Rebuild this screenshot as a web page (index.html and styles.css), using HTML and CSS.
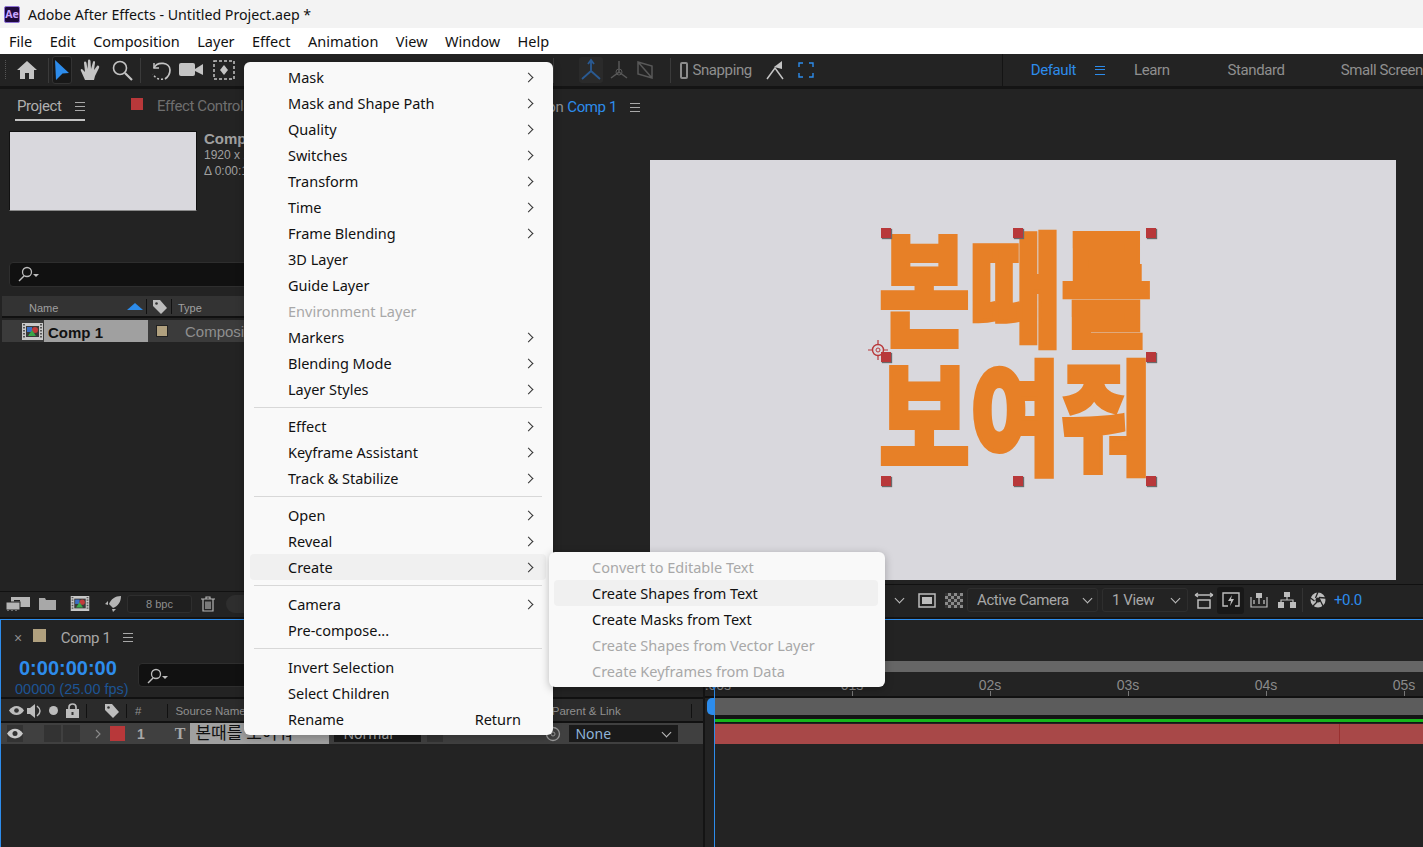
FILE: index.html
```html
<!DOCTYPE html>
<html lang="en">
<head>
    <meta charset="UTF-8">
    <meta name="viewport" content="width=device-width, initial-scale=1.0">
    <title>Adobe After Effects - Untitled Project.aep *</title>
    <link rel="stylesheet" href="styles.css">
</head>
<body>
<div class="titlebar">
    <div class="ae-logo">Ae</div>
    <span>Adobe After Effects - Untitled Project.aep *</span>
</div>
<div class="menubar">
    <span>File</span><span>Edit</span><span>Composition</span><span>Layer</span><span>Effect</span>
    <span>Animation</span><span>View</span><span>Window</span><span>Help</span>
</div>

<div class="toolbar">
    <div class="grip"></div>
    <svg class="tool-home" width="22" height="20" viewBox="0 0 22 20"><path d="M11 1 L21 10 L18 10 L18 19 L13 19 L13 13 L9 13 L9 19 L4 19 L4 10 L1 10 Z" fill="#c4c4c4"/></svg>
    <div class="tool-sep"></div>
    <div class="tool-active"><svg width="18" height="22" viewBox="0 0 18 22"><path d="M2 1 L16 14 L9.500 14.500 L3 21 Z" fill="#2d8ceb"/></svg></div>
    <svg class="tool-hand" width="22" height="24" viewBox="0 0 22 24"><path d="M6 22 L2 13 C1 11 3 10 4 12 L6 14 L5 5 C5 3 7 3 7.500 5 L8.500 11 L9 3 C9 1 11 1 11.500 3 L12 11 L14 4 C14.500 2 16.500 3 16 5 L15 12 L18 8 C19 7 21 8 20 10 L16 18 L15 22 Z" fill="#c4c4c4"/></svg>
    <svg class="tool-zoom" width="22" height="22" viewBox="0 0 22 22"><circle cx="9" cy="9" r="6.500" fill="none" stroke="#c4c4c4" stroke-width="1.600"/><path d="M14 14 L21 21" stroke="#c4c4c4" stroke-width="2.200"/></svg>
    <div class="tool-sep tool-sep-b"></div>
    <svg class="tool-rotate" width="22" height="22" viewBox="0 0 22 22"><path d="M4 4 L4 9 L9 9" fill="none" stroke="#c4c4c4" stroke-width="1.500"/><path d="M4 9 C7 2 20 3 20 11 C20 15 18 18 15 20" fill="none" stroke="#c4c4c4" stroke-width="1.700"/><path d="M13 20 C9 21 5 19 3 15" fill="none" stroke="#c4c4c4" stroke-width="1.500" stroke-dasharray="2 2"/></svg>
    <svg class="tool-cam" width="25" height="18" viewBox="0 0 25 18"><rect x="0" y="2" width="16" height="13" rx="2" fill="#c4c4c4"/><path d="M16 8 L24 3 L24 14 L16 10 Z" fill="#c4c4c4"/></svg>
    <svg class="tool-pan" width="22" height="20" viewBox="0 0 22 20"><rect x="1" y="1" width="20" height="18" fill="none" stroke="#c4c4c4" stroke-width="1.500" stroke-dasharray="3 2"/><path d="M11 5 L15 10 L11 15 L7 10 Z" fill="#c4c4c4"/></svg>

    <div class="tool-sep tool-sep-c"></div>
    <div class="axis-active"><svg width="24" height="24" viewBox="0 0 24 24"><path d="M12 3 L12 13 L3 21 M12 13 L21 21 M9 6 L12 2 L15 6" fill="none" stroke="#2a5a92" stroke-width="1.800"/></svg></div>
    <svg class="axis" width="22" height="22" viewBox="0 0 22 22"><path d="M11 2 L11 13 L3 19 M11 13 L19 19" fill="none" stroke="#585858" stroke-width="1.500"/><circle cx="11" cy="13" r="3" fill="none" stroke="#585858"/></svg>
    <svg class="axis" width="20" height="22" viewBox="0 0 20 22"><path d="M3 3 L17 7 L17 19 L3 15 Z M3 3 L17 19" fill="none" stroke="#585858" stroke-width="1.500"/></svg>
    <div class="tool-sep tool-sep-d"></div>
    <div class="snap-box"></div>
    <span class="snap-label narrow">Snapping</span>
    <svg class="snap-icon" width="18" height="20" viewBox="0 0 18 20"><path d="M1 19 L9 8 L17 19" fill="none" stroke="#c4c4c4" stroke-width="1.500"/><path d="M8 7 L16 1 L16 9 Z" fill="#c4c4c4"/></svg>
    <svg class="snap-icon-b" width="16" height="16" viewBox="0 0 16 16"><path d="M1 5 L1 1 L5 1 M11 1 L15 1 L15 5 M15 11 L15 15 L11 15 M5 15 L1 15 L1 11" fill="none" stroke="#2d8ceb" stroke-width="1.400"/><path d="M6 6 L6 6.100 M10 6 L10 6.100 M6 10 L6 10.100 M10 10 L10 10.100" stroke="#2d8ceb" stroke-width="1.500"/></svg>
    <div class="workspace narrow">
        <span class="ws-default">Default</span>
        <div class="burger burger-blue"></div>
        <span class="ws-learn">Learn</span>
        <span class="ws-standard">Standard</span>
        <span class="ws-small">Small Screen</span>
    </div>
</div>

<div class="main">
    <div class="project">
        <div class="tabs narrow">
            <div class="tab-project">Project <div class="burger"></div></div>
            <div class="swatch-red"></div>
            <span class="tab-effect">Effect Controls</span>
        </div>
        <div class="project-info">
            <div class="thumb"></div>
            <div class="info-text">
                <b>Comp 1</b>
                <div>1920 x 1080</div>
                <div>Δ 0:00:10:00</div>
            </div>
        </div>
        <div class="search">
            <svg width="22" height="16" viewBox="0 0 22 16"><circle cx="9" cy="6" r="4.500" fill="none" stroke="#bdbdbd" stroke-width="1.300"/><path d="M6 10 L1 15" stroke="#bdbdbd" stroke-width="1.500"/><path d="M15 8 L21 8 L18 11 Z" fill="#bdbdbd"/></svg>
        </div>
        <div class="table-head">
            <div class="th-name">Name</div>
            <div class="sort-arrow"></div>
            <div class="th-sep"></div>
            <svg class="th-tag" width="16" height="16" viewBox="0 0 16 16"><path d="M1 1 L8 1 L15 9 L9 15 L1 7 Z" fill="#bdbdbd"/><circle cx="4.500" cy="4.500" r="1.300" fill="#333"/></svg>
            <div class="th-sep"></div>
            <div class="th-type">Type</div>
        </div>
        <div class="table-row">
            <svg class="comp-icon" width="21" height="17" viewBox="0 0 21 17"><rect width="21" height="17" fill="#c8c8c8"/><path d="M2 1 V16 M19 1 V16" stroke="#555" stroke-width="2" stroke-dasharray="1.500 1.500"/><rect x="4" y="3" width="13" height="11" fill="#3a3a3a"/><rect x="5" y="4" width="5" height="5" fill="#3b6fc4"/><circle cx="13" cy="7" r="3" fill="#c23b3b"/><path d="M6 13 L10 7 L14 13 Z" fill="#3aa84a"/></svg>
            <div class="comp-name">Comp 1</div>
            <div class="swatch-tan"></div>
            <div class="comp-type">Composition</div>
        </div>
        <div class="spacer"></div>
        <div class="project-foot">
            <svg class="foot-a" width="24" height="15" viewBox="0 0 24 15"><rect x="5" y="1" width="19" height="10" fill="#b5b5b5"/><rect x="8" y="4" width="6" height="1.500" fill="#222"/><rect x="0" y="6" width="14" height="8" fill="#b5b5b5" stroke="#232323"/><path d="M2 14 v1 M6 14 v1 M10 14 v1" stroke="#b5b5b5"/></svg>
            <svg class="foot-b" width="17" height="13" viewBox="0 0 17 13"><path d="M0 1 L6 1 L7 3 L17 3 L17 13 L0 13 Z" fill="#a8a8a8"/></svg>
            <svg class="foot-c" width="22" height="15" viewBox="0 0 21 17"><rect width="21" height="17" fill="#c8c8c8"/><path d="M2 1 V16 M19 1 V16" stroke="#555" stroke-width="2" stroke-dasharray="1.500 1.500"/><rect x="4" y="3" width="13" height="11" fill="#3a3a3a"/><rect x="5" y="4" width="5" height="5" fill="#3b6fc4"/><circle cx="13" cy="7" r="3" fill="#c23b3b"/><path d="M6 13 L10 7 L14 13 Z" fill="#3aa84a"/></svg>
            <svg class="foot-d" width="16" height="16" viewBox="0 0 16 16"><path d="M16 0 C10 0 6 3 4 8 L8 12 C13 10 16 6 16 0 Z M3 5 L0 8 L3 9 Z M7 13 L8 16 L11 13 Z" fill="#b5b5b5"/></svg>
            <div class="bpc">8 bpc</div>
            <svg class="foot-e" width="14" height="16" viewBox="0 0 14 16"><path d="M0 3 H14 M5 3 V1 H9 V3 M2 3 V15 H12 V3 M5 5.500 V13 M7 5.500 V13 M9 5.500 V13" fill="none" stroke="#b5b5b5" stroke-width="1.200"/></svg>
            <div class="foot-toggle"></div>
        </div>
    </div>

    <div class="viewer">
        <div class="viewer-tab narrow">Composition <span class="blue">Comp 1</span> <div class="burger"></div></div>
        <div class="stage">
            <div class="stage-text">본때를<br>보여줘</div>
            <div class="handle h1"></div><div class="handle h2"></div><div class="handle h3"></div>
            <div class="handle h4"></div><div class="handle h5"></div>
            <div class="handle h6"></div><div class="handle h7"></div><div class="handle h8"></div>
            <svg class="anchor" width="20" height="20" viewBox="0 0 20 20"><circle cx="10" cy="10" r="5.500" fill="none" stroke="#b8383a" stroke-width="1.400"/><circle cx="10" cy="10" r="2" fill="none" stroke="#b8383a"/><path d="M10 0 V5 M10 15 V20 M0 10 H5 M15 10 H20" stroke="#b8383a" stroke-width="1.200"/></svg>
        </div>
        <div class="viewer-bar narrow">
            <div class="chev"></div>
            <svg class="vb-mon" width="18" height="15" viewBox="0 0 18 15"><rect x="1" y="1" width="16" height="13" fill="none" stroke="#bdbdbd" stroke-width="1.500"/><rect x="4" y="4" width="10" height="7" fill="#bdbdbd"/></svg>
            <svg class="vb-check" width="18" height="15" viewBox="0 0 18 15"><rect width="18" height="15" fill="#8a8a8a"/><path d="M0 0 h3 v3 h-3z M6 0 h3 v3 h-3z M12 0 h3 v3 h-3z M3 3 h3 v3 h-3z M9 3 h3 v3 h-3z M15 3 h3 v3 h-3z M0 6 h3 v3 h-3z M6 6 h3 v3 h-3z M12 6 h3 v3 h-3z M3 9 h3 v3 h-3z M9 9 h3 v3 h-3z M15 9 h3 v3 h-3z M0 12 h3 v3 h-3z M6 12 h3 v3 h-3z M12 12 h3 v3 h-3z" fill="#333"/></svg>
            <div class="drop drop-cam">Active Camera<div class="chev"></div></div>
            <div class="drop drop-view">1 View<div class="chev"></div></div>
            <svg class="vb-a" width="20" height="17" viewBox="0 0 20 17"><path d="M1 3 H19 M1 3 L4 1 M1 3 L4 5 M19 3 L16 1 M19 3 L16 5" fill="none" stroke="#bdbdbd" stroke-width="1.300"/><rect x="4" y="8" width="12" height="8" fill="none" stroke="#bdbdbd" stroke-width="1.500"/></svg>
            <div class="vb-b"><svg width="18" height="17" viewBox="0 0 18 17"><path d="M6 14 H1 V1 H17 V14 H13" fill="none" stroke="#bdbdbd" stroke-width="1.400"/><path d="M10 3 L6 9 L9 9 L8 14 L12 7 L9 7 Z" fill="#bdbdbd"/></svg></div>
            <svg class="vb-c" width="18" height="15" viewBox="0 0 18 15"><path d="M1 4 V14 H17 V4" fill="none" stroke="#bdbdbd" stroke-width="1.200"/><path d="M9 5 V11 M4 7 V11 M14 7 V11" stroke="#bdbdbd" stroke-width="1.300"/><rect x="6" y="0" width="6" height="5" fill="#bdbdbd"/></svg>
            <svg class="vb-d" width="18" height="16" viewBox="0 0 18 16"><rect x="6" y="0" width="6" height="5" fill="#bdbdbd"/><rect x="0" y="10" width="6" height="6" fill="#bdbdbd"/><rect x="12" y="10" width="6" height="6" fill="#bdbdbd"/><path d="M9 5 V8 M3 10 V8 H15 V10" fill="none" stroke="#bdbdbd" stroke-width="1.200"/></svg>
            <div class="vb-sep"></div>
            <svg class="vb-e" width="16" height="16" viewBox="0 0 16 16"><circle cx="8" cy="8" r="7.500" fill="#bdbdbd"/><path d="M8 0 L5.500 6 M15.500 6 L9 5.500 M13 14 L10 8 M3 14 L7 10 M0.500 6 L4.500 9" stroke="#232323" stroke-width="1.300"/><circle cx="8" cy="8" r="2.500" fill="#232323"/></svg>
            <span class="exposure">+0.0</span>
        </div>
    </div>
</div>

<div class="timeline">
    <div class="tl-left">
        <div class="tl-tab narrow">
            <span class="tl-x">×</span>
            <div class="swatch-tan swatch-tan-big"></div>
            <span class="tl-name">Comp 1</span>
            <div class="burger"></div>
        </div>
        <div class="tl-time">
            <div class="time-code">
                <div class="time-big">0:00:00:00</div>
                <div class="time-small">00000 (25.00 fps)</div>
            </div>
            <div class="search search-tl">
                <svg width="22" height="16" viewBox="0 0 22 16"><circle cx="9" cy="6" r="4.500" fill="none" stroke="#bdbdbd" stroke-width="1.300"/><path d="M6 10 L1 15" stroke="#bdbdbd" stroke-width="1.500"/><path d="M15 8 L21 8 L18 11 Z" fill="#bdbdbd"/></svg>
            </div>
        </div>
        <div class="col-head">
            <svg class="ch-eye" width="15" height="11" viewBox="0 0 16 11"><path d="M0 5.500 C4 -1 12 -1 16 5.500 C12 12 4 12 0 5.500 Z" fill="#bdbdbd"/><circle cx="8" cy="5.500" r="2.500" fill="#333"/></svg>
            <svg class="ch-audio" width="16" height="16" viewBox="0 0 16 16"><path d="M0 5 H3 L8 1 V15 L3 11 H0 Z" fill="#bdbdbd"/><path d="M10 3 C14 6 14 10 10 13" fill="none" stroke="#bdbdbd" stroke-width="1.500"/></svg>
            <div class="ch-dot"></div>
            <svg class="ch-lock" width="13" height="15" viewBox="0 0 13 15"><rect y="6" width="13" height="9" fill="#bdbdbd"/><path d="M3 6 V4 C3 0 10 0 10 4 V6" fill="none" stroke="#bdbdbd" stroke-width="1.700"/><rect x="5.500" y="9" width="2" height="3" fill="#333"/></svg>
            <div class="ch-sep"></div>
            <svg class="ch-tag" width="16" height="16" viewBox="0 0 16 16"><path d="M1 1 L8 1 L15 9 L9 15 L1 7 Z" fill="#bdbdbd"/><circle cx="4.500" cy="4.500" r="1.300" fill="#333"/></svg>
            <div class="ch-sep ch-sep-tag"></div>
            <span class="ch-num">#</span>
            <div class="ch-sep ch-sep-num"></div>
            <span class="ch-source">Source Name</span>
            <span class="ch-parent">Parent &amp; Link</span>
            <div class="ch-sep ch-sep-end"></div>
        </div>
        <div class="layer">
            <div class="eye-box"><svg width="16" height="11" viewBox="0 0 16 11"><path d="M0 5.500 C4 -1 12 -1 16 5.500 C12 12 4 12 0 5.500 Z" fill="#c8c8c8"/><circle cx="8" cy="5.500" r="2.500" fill="#333"/></svg></div>
            <div class="dark-box dark-box-a"></div>
            <div class="dark-box dark-box-b"></div>
            <svg class="layer-chev" width="6" height="10" viewBox="0 0 6 10"><path d="M1 1 L5 5 L1 9" fill="none" stroke="#8c8c8c" stroke-width="1.100"/></svg>
            <div class="layer-red"></div>
            <span class="layer-num">1</span>
            <span class="layer-t">T</span>
            <div class="layer-name">본때를 보여줘</div>
            <div class="layer-mode">Normal</div>
            <div class="layer-trk"></div>
            <svg class="layer-spiral" width="16" height="16" viewBox="0 0 16 16"><circle cx="8" cy="8" r="6.500" fill="none" stroke="#9a9a9a" stroke-width="1.300"/><circle cx="8" cy="8" r="2" fill="none" stroke="#9a9a9a"/></svg>
            <div class="layer-parent">None<div class="chev"></div></div>
        </div>
    </div>
    <div class="tl-right">
        <div class="work-bar"></div>
        <div class="ruler">
            <div class="tick">0:00s</div>
            <div class="tick">01s</div>
            <div class="tick">02s</div>
            <div class="tick">03s</div>
            <div class="tick">04s</div>
            <div class="tick">05s</div>
        </div>
        <div class="range-row">
            <div class="range-cap"></div>
            <div class="range-bar"></div>
        </div>
        <div class="green-line"></div>
        <div class="track"><div class="track-mark"></div></div>
    </div>
    <div class="playhead"></div>
</div>

<div class="menu">
    <div class="item sub">Mask</div>
    <div class="item sub">Mask and Shape Path</div>
    <div class="item sub">Quality</div>
    <div class="item sub">Switches</div>
    <div class="item sub">Transform</div>
    <div class="item sub">Time</div>
    <div class="item sub">Frame Blending</div>
    <div class="item">3D Layer</div>
    <div class="item">Guide Layer</div>
    <div class="item off">Environment Layer</div>
    <div class="item sub">Markers</div>
    <div class="item sub">Blending Mode</div>
    <div class="item sub">Layer Styles</div>
    <div class="sep"></div>
    <div class="item sub">Effect</div>
    <div class="item sub">Keyframe Assistant</div>
    <div class="item sub">Track &amp; Stabilize</div>
    <div class="sep"></div>
    <div class="item sub">Open</div>
    <div class="item sub">Reveal</div>
    <div class="item sub hover">Create</div>
    <div class="sep"></div>
    <div class="item sub">Camera</div>
    <div class="item">Pre-compose...</div>
    <div class="sep"></div>
    <div class="item">Invert Selection</div>
    <div class="item">Select Children</div>
    <div class="item">Rename<span class="shortcut">Return</span></div>
</div>

<div class="menu submenu">
    <div class="item off">Convert to Editable Text</div>
    <div class="item hover">Create Shapes from Text</div>
    <div class="item">Create Masks from Text</div>
    <div class="item off">Create Shapes from Vector Layer</div>
    <div class="item off">Create Keyframes from Data</div>
</div>
</body>
</html>
```

FILE: styles.css
```css
* {
    box-sizing: border-box;
}

body {
    margin: 0;
    width: 1423px;
    height: 847px;
    overflow: hidden;
    position: relative;
    display: flex;
    flex-direction: column;
    background-color: #141414;
    font-family: Roboto, sans-serif;
    color: #8f8f8f;
}

svg {
    flex: none;
}

/* the app's labels are set in a condensed face */
.narrow {
    font: 15px Roboto, sans-serif;
    letter-spacing: -0.4px;
}

/* windows chrome */
.titlebar {
    height: 28px;
    flex: none;
    display: flex;
    align-items: center;
    padding-left: 4px;
    gap: 8px;
    background-color: #f3f3f3;
    color: #111;
    font: 14.200px "Noto Sans", sans-serif;
}

.ae-logo {
    width: 16px;
    height: 17px;
    background-color: #1f0a3d;
    border: 1px solid #8f73d6;
    border-radius: 2px;
    color: #c9a6ff;
    font: bold 10.500px/15px "Noto Sans", sans-serif;
    text-align: center;
}

.menubar {
    height: 26px;
    flex: none;
    display: flex;
    align-items: center;
    gap: 17.500px;
    padding-left: 9px;
    background-color: #fff;
    color: #111;
    font: 14.500px "Noto Sans", sans-serif;
}

/* top toolbar */
.toolbar {
    height: 35px;
    flex: none;
    display: flex;
    align-items: center;
    background-color: #232323;
    border-bottom: 3px solid #141414;
}

.grip {
    width: 3px;
    height: 20px;
    margin-left: 5px;
    background: repeating-linear-gradient(#555 0 1px, transparent 1px 2px);
}

.tool-home { margin-left: 10px; }

.tool-sep {
    width: 1px;
    height: 25px;
    margin-left: 10px;
    background-color: #3a3a3a;
}

.tool-active {
    width: 28px;
    height: 28px;
    margin-left: 3px;
    display: flex;
    align-items: center;
    justify-content: center;
    background-color: #181818;
    border: 1px solid #333;
    border-radius: 3px;
}

.tool-hand { margin-left: 7px; }
.tool-zoom { margin-left: 10px; }
.tool-sep-b { margin-left: 7px; }
.tool-rotate { margin-left: 10px; }
.tool-cam { margin-left: 7px; }
.tool-pan { margin-left: 9px; }
.tool-sep-c { margin-left: 318px; }

.axis-active {
    width: 26px;
    height: 26px;
    margin-left: 26px;
    background-color: #2a2a2a;
    border-radius: 3px;
    display: flex;
    align-items: center;
    justify-content: center;
}

.axis { margin-left: 5px; }
.tool-sep-d { margin-left: 15px; }

.snap-box {
    width: 16px;
    height: 17px;
    margin-left: 9px;
    border: 2px solid #8c8c8c;
    border-radius: 2px;
}

.snap-label {
    margin-left: 4px;
    color: #8f8f8f;
}

.snap-icon { margin-left: 14px; }
.snap-icon-b { margin-left: 14px; }

.workspace {
    height: 32px;
    margin-left: 188px;
    padding-left: 28px;
    display: flex;
    align-items: center;
    white-space: nowrap;
    border-left: 1px solid #141414;
}

.ws-default { color: #2d8ceb; }
.burger-blue { margin-left: 19px; }
.ws-learn { margin-left: 29px; }
.ws-standard { margin-left: 58px; }
.ws-small { margin-left: 56px; }

.burger {
    width: 10px;
    height: 9px;
    flex: none;
    border-top: 1.5px solid #a8a8a8;
    border-bottom: 1.5px solid #a8a8a8;
    position: relative;
}

.burger::after {
    content: "";
    position: absolute;
    left: 0;
    right: 0;
    top: 2.500px;
    border-top: 1.5px solid #a8a8a8;
}

.burger-blue,
.burger-blue::after {
    border-color: #2d8ceb;
}

/* project panel + viewer */
.main {
    height: 528px;
    flex: none;
    display: grid;
    grid-template-columns: 440px 1fr;
    background-color: #232323;
}

.project {
    display: flex;
    flex-direction: column;
}

.tabs {
    height: 36px;
    flex: none;
    display: flex;
    align-items: flex-start;
}

.tab-project {
    width: 70px;
    height: 32px;
    margin-left: 15px;
    padding: 8px 0 0 2px;
    display: flex;
    justify-content: space-between;
    color: #b0b0b0;
    border-bottom: 2px solid #c4c4c4;
}

.tab-project .burger { margin-top: 5px; }

.swatch-red {
    width: 12px;
    height: 12px;
    margin: 9px 0 0 46px;
    background-color: #b8383a;
}

.tab-effect {
    margin: 8px 0 0 14px;
    color: #6f6f6f;
}

.project-info {
    height: 137px;
    flex: none;
    display: flex;
    padding: 6px 0 0 9px;
}

.thumb {
    width: 188px;
    height: 80px;
    background-color: #d9d8dd;
    border: 1px solid #111;
    border-bottom-color: #8a8a8a;
}

.info-text {
    margin-left: 7px;
    font: 12px/16px "Liberation Sans", sans-serif;
    color: #a0a0a0;
}

.info-text b {
    display: block;
    margin-top: -1px;
    font-size: 15px;
    line-height: 17px;
}

.search {
    height: 25px;
    flex: none;
    margin-left: 9px;
    padding: 3px 0 0 8px;
    background-color: #111;
    border: 1px solid #2e2e2e;
    border-radius: 4px;
}

.table-head {
    height: 22px;
    flex: none;
    margin: 9px 0 0 2px;
    padding-top: 1px;
    display: flex;
    align-items: center;
    background-color: #333;
    font: 11px "Liberation Sans", sans-serif;
    border-bottom: 2px solid #111;
}

.th-name {
    width: 98px;
    margin-left: 27px;
    padding-top: 2px;
    color: #a0a0a0;
}

.sort-arrow {
    border: 8px solid transparent;
    border-top: 0;
    border-bottom: 7px solid #2d8ceb;
}

.th-sep {
    width: 1px;
    height: 15px;
    margin-left: 3px;
    background-color: #111;
}

.th-tag { margin-left: 5px; }
.th-type { margin-left: 6px; padding-top: 2px; color: #a0a0a0; }

.table-row {
    height: 22px;
    flex: none;
    margin: 2px 0 0 2px;
    display: flex;
    align-items: center;
    background-color: #3b3b3b;
}

.comp-icon { margin-left: 20px; }

.comp-name {
    width: 104px;
    height: 22px;
    margin-left: 1px;
    padding-left: 4px;
    background-color: #a0a0a0;
    color: #111;
    font: bold 15px/26px "Liberation Sans", sans-serif;
}

.swatch-tan {
    width: 12px;
    height: 12px;
    margin-left: 8px;
    background-color: #b0a07e;
    border: 1px solid #222;
}

.comp-type {
    margin-left: 17px;
    font: 15px "Liberation Sans", sans-serif;
    color: #8f8f8f;
}

.spacer {
    flex: 1;
}

.project-foot {
    height: 24px;
    flex: none;
    display: flex;
    align-items: center;
    margin-bottom: 2px;
    border-top: 1px solid #111;
}

.foot-a { margin-left: 6px; }
.foot-b { margin-left: 9px; }
.foot-c { margin-left: 13px; }
.foot-d { margin-left: 14px; }

.bpc {
    width: 65px;
    height: 18px;
    margin-left: 6px;
    background-color: #1f1f1f;
    border: 1px solid #2e2e2e;
    border-radius: 3px;
    text-align: center;
    font: 11px/16px "Liberation Sans", sans-serif;
    color: #8f8f8f;
}

.foot-e { margin-left: 9px; }

.foot-toggle {
    width: 40px;
    height: 18px;
    margin-left: 11px;
    background-color: #2e2e2e;
    border-radius: 9px;
}

.viewer {
    display: flex;
    flex-direction: column;
    padding-left: 210px;
}

.viewer-tab {
    height: 71px;
    flex: none;
    padding-top: 9px;
    display: flex;
    gap: 4px;
    justify-content: flex-end;
    margin-left: -200px;
    margin-right: 783px;
    white-space: nowrap;
}

.viewer-tab .burger {
    margin: 5px 0 0 9px;
}

.blue {
    color: #2d8ceb;
}

.stage {
    width: 746px;
    height: 420px;
    flex: none;
    position: relative;
    background-color: #d9d8dd;
}

.stage-text {
    position: absolute;
    left: 229px;
    top: 58px;
    width: 266px;
    height: 248px;
    font: 900 88px/92px "Noto Sans CJK KR", sans-serif;
    color: #e78027;
    -webkit-text-stroke: 3px #e78027;
    white-space: nowrap;
    transform: scale(1.123, 1.4);
    transform-origin: 0 0;
}

.handle {
    position: absolute;
    width: 10px;
    height: 10px;
    background-color: #b8383a;
    box-shadow: 1px 1px 1px #6a6a6a;
}

.h1 { left: 231px; top: 68px; }
.h2 { left: 363px; top: 68px; }
.h3 { left: 496px; top: 68px; }
.h4 { left: 231px; top: 192px; }
.h5 { left: 496px; top: 192px; }
.h6 { left: 231px; top: 316px; }
.h7 { left: 363px; top: 316px; }
.h8 { left: 496px; top: 316px; }

.anchor {
    position: absolute;
    left: 218px;
    top: 180px;
}

.viewer-bar {
    height: 31px;
    flex: none;
    margin-top: 4px;
    margin-right: -27px;
    margin-left: -90px;
    display: flex;
    align-items: center;
    border-top: 1px solid #111;
}

.chev {
    width: 7px;
    height: 7px;
    flex: none;
    border-right: 1.5px solid #bdbdbd;
    border-bottom: 1.5px solid #bdbdbd;
    transform: rotate(45deg);
    margin-top: -3px;
}

.viewer-bar > .chev { margin-left: 336px; }
.vb-mon { margin-left: 15px; }
.vb-check { margin-left: 9px; }

.drop {
    height: 24px;
    display: flex;
    align-items: center;
    justify-content: space-between;
    border: 1px solid #2e2e2e;
    border-radius: 3px;
    color: #a8a8a8;
    white-space: nowrap;
}

.drop-cam {
    width: 131px;
    margin-left: 4px;
    padding: 0 6px 0 9px;
}

.drop-view {
    width: 86px;
    margin-left: 4px;
    padding: 0 8px 0 9px;
}

.vb-a { margin-left: 6px; }

.vb-b {
    width: 27px;
    height: 27px;
    margin-left: 3px;
    display: flex;
    align-items: center;
    justify-content: center;
    background-color: #181818;
    border-radius: 3px;
}

.vb-c { margin-left: 6px; }
.vb-d { margin-left: 10px; }

.vb-sep {
    width: 1px;
    height: 24px;
    margin-left: 6px;
    background-color: #333;
}

.vb-e { margin-left: 7px; }

.exposure {
    margin-left: 8px;
    color: #2d8ceb;
}

/* timeline */
.timeline {
    flex: 1;
    margin-top: 2px;
    position: relative;
    display: grid;
    grid-template-columns: 704px 1fr;
    background-color: #232323;
    border-top: 1px solid #2d8ceb;
    border-left: 1px solid #2d8ceb;
    overflow: hidden;
}

.tl-left {
    position: relative;
    z-index: 1;
    background-color: #232323;
    border-right: 2px solid #141414;
}

.tl-tab {
    height: 35px;
    display: flex;
    align-items: center;
}

.tl-x {
    margin-left: 13px;
    font: 14px "Liberation Sans", sans-serif;
    color: #8f8f8f;
}

.swatch-tan-big {
    width: 13px;
    height: 13px;
    margin: -4px 0 0 11px;
    border: 0;
}

.tl-name {
    margin-left: 15px;
    color: #a8a8a8;
}

.tl-tab .burger { margin-left: 13px; }

.tl-time {
    height: 44px;
    display: flex;
    align-items: flex-start;
    border-bottom: 2px solid #111;
}

.time-code {
    width: 123px;
    margin-left: 14px;
    padding-top: 1px;
    white-space: nowrap;
    flex: none;
}

.time-big {
    margin-left: 4px;
    font: bold 20px/24px "Liberation Sans", sans-serif;
    color: #2d8ceb;
}

.time-small {
    margin-top: 1px;
    font: 14.500px/16px "Liberation Sans", sans-serif;
    color: #1d5494;
}

.search-tl {
    width: 300px;
    height: 24px;
    margin: 8px 0 0 0;
    padding-top: 4px;
}

.col-head {
    height: 24px;
    display: flex;
    align-items: center;
    background-color: #2b2b2b;
    font: 11.500px "Liberation Sans", sans-serif;
    color: #8f8f8f;
    border-bottom: 2px solid #111;
    padding-top: 1px;
}

.ch-eye { margin-left: 8px; }
.ch-audio { margin-left: 3px; }

.ch-dot {
    width: 9px;
    height: 9px;
    margin-left: 6px;
    border-radius: 50%;
    background-color: #bdbdbd;
}

.ch-lock { margin-left: 8px; }

.ch-sep {
    width: 1px;
    height: 14px;
    margin-left: 7px;
    background-color: #111;
}

.ch-tag { margin-left: 17px; }
.ch-sep-tag { margin-left: 6px; }
.ch-num { margin-left: 8px; }
.ch-sep-num { margin-left: 26px; }
.ch-source { margin-left: 7px; }
.ch-parent { margin-left: 306px; }
.ch-sep-end { margin-left: 70px; }

.layer {
    height: 21px;
    display: flex;
    align-items: center;
    background-color: #404040;
}

.eye-box {
    width: 16px;
    height: 17px;
    margin-left: 6px;
    display: flex;
    align-items: center;
    justify-content: center;
    background-color: #333;
}

.dark-box {
    width: 17px;
    height: 17px;
    background-color: #333;
}

.dark-box-a { margin-left: 21px; }
.dark-box-b { margin-left: 2px; }
.layer-chev { margin-left: 15px; }

.layer-red {
    width: 15px;
    height: 15px;
    margin-left: 9px;
    background-color: #b8383a;
}

.layer-num {
    margin-left: 12px;
    font: bold 14px "Liberation Sans", sans-serif;
    color: #a8a8a8;
}

.layer-t {
    margin-left: 30px;
    font: bold 16px "Liberation Serif", serif;
    color: #a8a8a8;
}

.layer-name {
    width: 139px;
    height: 21px;
    margin-left: 5px;
    padding-left: 5px;
    background-color: #a0a0a0;
    color: #111;
    font: 17px/17px "Noto Sans CJK KR", sans-serif;
    white-space: nowrap;
}

.layer-mode {
    width: 87px;
    height: 16px;
    margin-left: 5px;
    padding-left: 9px;
    background-color: #1a1a1a;
    color: #a8a8a8;
    font: 14px/16px "Noto Sans", sans-serif;
}

.layer-trk {
    width: 16px;
    height: 16px;
    margin-left: 6px;
    background-color: #333;
}

.layer-spiral { margin-left: 102px; }

.layer-parent {
    width: 109px;
    height: 17px;
    margin-left: 8px;
    padding: 0 8px 0 6px;
    display: flex;
    align-items: center;
    justify-content: space-between;
    background-color: #1a1a1a;
    color: #8fb4d8;
    font: 14px "Noto Sans", sans-serif;
}

.tl-right {
    min-width: 0;
    padding-top: 41px;
}

.work-bar {
    height: 11px;
    margin-left: 9px;
    background-color: #666;
}

.ruler {
    height: 26px;
    display: flex;
    margin-left: -60px;
    border-bottom: 2px solid #111;
}

.tick {
    width: 138px;
    flex: none;
    position: relative;
    padding-top: 5px;
    text-align: center;
    font: 14px "Liberation Sans", sans-serif;
    color: #8a8a8a;
}

.tick::after {
    content: "";
    position: absolute;
    left: 50%;
    bottom: 0;
    height: 5px;
    border-left: 1px solid #777;
}

.range-row {
    height: 17px;
    display: flex;
}

.range-cap {
    width: 7px;
    margin-left: 2px;
    background-color: #2d8ceb;
    border-radius: 5px 0 0 5px;
}

.range-bar {
    flex: 1;
    background-color: #5c5c5c;
}

.green-line {
    height: 8px;
    margin: 0 0 1px 9px;
    background-color: #16b51a;
    border-top: 4px solid #141414;
    border-bottom: 1px solid #141414;
}

.track {
    height: 20px;
    margin-left: 9px;
    position: relative;
    background-color: #a84848;
}

.track-mark {
    position: absolute;
    left: 625px;
    top: 0;
    width: 1px;
    height: 20px;
    background-color: #9a3030;
}

.playhead {
    position: absolute;
    left: 713px;
    top: 60px;
    bottom: 0;
    z-index: 2;
    width: 1px;
    background-color: #2d8ceb;
}

.playhead::before {
    content: "";
    position: absolute;
    left: -6px;
    top: 0;
    border: 6.500px solid transparent;
    border-top: 10px solid #2d8ceb;
    border-bottom: 0;
}

/* context menu */
.menu {
    position: absolute;
    z-index: 5;
    left: 244px;
    top: 62px;
    width: 309px;
    height: 673px;
    padding: 2px 7px 3px 6px;
    background-color: #f9f9f9;
    border-radius: 6px;
    box-shadow: 0 2px 8px rgba(0, 0, 0, 0.25);
    color: #111;
    font: 14.500px "Noto Sans", sans-serif;
}

.submenu {
    z-index: 6;
    left: 549px;
    top: 552px;
    width: 336px;
    height: 135px;
    padding: 2px 7px 0 5px;
}

.item {
    height: 26px;
    padding-left: 38px;
    position: relative;
    line-height: 26px;
    border-radius: 4px;
}

.off {
    color: #a8a8a8;
}

.hover {
    background-color: #f0f0f0;
}

.sub::after {
    content: "";
    position: absolute;
    left: 275px;
    top: 10px;
    width: 6px;
    height: 6px;
    border-top: 1.5px solid #333;
    border-right: 1.5px solid #333;
    transform: rotate(45deg);
}

.shortcut {
    position: absolute;
    right: 25px;
}

.sep {
    height: 1px;
    margin: 5px 4px;
    background-color: #d8d8d8;
}
```
